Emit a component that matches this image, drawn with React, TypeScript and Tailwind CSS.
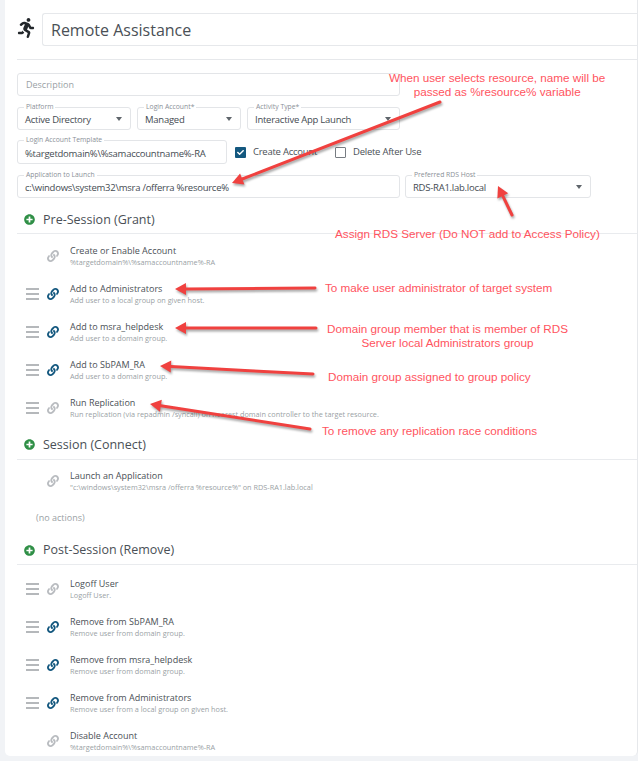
// App.tsx — Remote Assistance activity form with red annotations on top
import type { ReactNode } from 'react';
import { FaLink, FaPlusCircle, FaRunning, FaCheck } from 'react-icons/fa';

function Field({ label, className, children, arrow }: { label: string; className: string; children: ReactNode; arrow?: boolean }) {
  return (
    <div className={`relative flex items-center rounded-[3px] border border-[#e3e5e8] bg-white pl-[7px] pr-[8px] text-[9.5px] tracking-[-0.25px] text-[#444b52] ${className}`}>
      <span className="absolute -top-[5px] left-[6px] bg-white px-[2px] text-[6.8px] leading-[8px] tracking-normal text-[#8a9097]">{label}</span>
      <span className="flex-1 whitespace-nowrap pt-[4px]">{children}</span>
      {arrow && <span className="h-0 w-0 border-x-[3.5px] border-t-[4px] border-x-transparent border-t-[#5f656b]" />}
    </div>
  );
}

function Heading({ children, className }: { children: string; className: string }) {
  return (
    <div className={`flex items-center gap-[8px] border-b border-[#e9ebee] pl-[7px] ${className}`}>
      <FaPlusCircle className="mt-[2px] h-[11px] w-[11px] text-[#2f8f46]" />
      <span className="pt-[3px] text-[12.5px] text-[#4a5056]">{children}</span>
    </div>
  );
}

function Item({ title, sub, drag, active }: { title: string; sub: string; drag?: boolean; active?: boolean }) {
  return (
    <div className="flex h-[38px] shrink-0 items-center">
      <div className="flex w-[30px] flex-col gap-[3px] pl-[9px]">
        {drag && (
          <>
            <span className="h-[2px] w-[13px] bg-[#b5b8bb]" />
            <span className="h-[2px] w-[13px] bg-[#b5b8bb]" />
            <span className="h-[2px] w-[13px] bg-[#b5b8bb]" />
          </>
        )}
      </div>
      <FaLink className={`h-[12px] w-[12px] ${active ? 'text-[#14587f]' : 'text-[#b9bcc0]'}`} />
      <div className="ml-[11px] flex flex-col">
        <span className="whitespace-nowrap text-[9px] leading-[12px] text-[#4a5056]">{title}</span>
        <span className="whitespace-nowrap text-[7.3px] leading-[10px] text-[#9a9fa5]">{sub}</span>
      </div>
    </div>
  );
}

function Arrow({ x1, y1, x2, y2 }: { x1: number; y1: number; x2: number; y2: number }) {
  const len = Math.hypot(x2 - x1, y2 - y1);
  const ux = (x2 - x1) / len;
  const uy = (y2 - y1) / len;
  const bx = x2 - ux * 11;
  const by = y2 - uy * 11;
  return (
    <g>
      <line x1={x1} y1={y1} x2={bx} y2={by} stroke="#f0413f" strokeWidth={3} strokeLinecap="round" />
      <polygon points={`${x2},${y2} ${bx - uy * 6},${by + ux * 6} ${bx + uy * 6},${by - ux * 6}`} fill="#f0413f" />
    </g>
  );
}

function Note({ className, children }: { className: string; children: ReactNode }) {
  return <div className={`absolute whitespace-nowrap text-center font-['Liberation_Sans',sans-serif] text-[11.7px] leading-[14px] text-[#ff5460] ${className}`}>{children}</div>;
}

export default function App() {
  return (
    <div className="relative h-[761px] w-[638px] overflow-hidden bg-[#f1f3f6] pl-[5px] font-['Open_Sans',sans-serif]">
      <div className="flex h-[756px] flex-col overflow-hidden rounded-b-[5px] border-r border-[#e6e8eb] bg-white pl-[12px]">
        {/* cabecera */}
        <div className="flex h-[46px] shrink-0 items-end gap-[7px]">
          <div className="flex h-[33px] w-[18px] items-center justify-center pb-[4px]">
            <FaRunning className="h-[20px] w-[18px] text-[#23272b]" />
          </div>
          <div className="flex h-[33px] flex-1 items-center rounded-l-[3px] border border-r-0 border-[#e6e8eb] pl-[8px] text-[16px] text-[#4a5056]">
            Remote Assistance
          </div>
        </div>
        <div className="mt-[13px] h-px shrink-0 bg-[#e6e8eb]" />

        {/* formulario */}
        <div className="mt-[13px] flex h-[23px] w-[383px] shrink-0 items-center rounded-[3px] border border-[#e3e5e8] pl-[8px] pt-[1px] text-[9px] text-[#9a9fa5]">
          Description
        </div>
        <div className="mt-[11px] flex h-[23px] w-[383px] shrink-0 gap-[6px]">
          <Field label="Platform" className="w-[114px]" arrow>Active Directory</Field>
          <Field label="Login Account*" className="w-[104px]" arrow>Managed</Field>
          <Field label="Activity Type*" className="flex-1" arrow>Interactive App Launch</Field>
        </div>
        <div className="mt-[10px] flex h-[24px] shrink-0 items-center">
          <Field label="Login Account Template" className="h-[24px] w-[210px]">%targetdomain%\%samaccountname%-RA</Field>
          <span className="ml-[8px] flex h-[11px] w-[11px] items-center justify-center rounded-[1px] bg-[#14587f]">
            <FaCheck className="h-[7px] w-[7px] text-white" />
          </span>
          <span className="ml-[7px] w-[82px] text-[9.5px] tracking-[-0.25px] text-[#4a5056]">Create Account</span>
          <span className="h-[11px] w-[11px] rounded-[1px] border border-[#777c82]" />
          <span className="ml-[7px] text-[9.5px] tracking-[-0.25px] text-[#4a5056]">Delete After Use</span>
        </div>
        <div className="mt-[11px] flex h-[23px] shrink-0 gap-[5px]">
          <Field label="Application to Launch" className="w-[383px]">c:\windows\system32\msra /offerra %resource%</Field>
          <Field label="Preferred RDS Host" className="w-[186px]" arrow>RDS-RA1.lab.local</Field>
        </div>

        {/* acciones */}
        <Heading className="h-[36px] shrink-0 pt-[6px]">Pre-Session (Grant)</Heading>
        <div className="mt-[3px] flex shrink-0 flex-col">
          <Item title="Create or Enable Account" sub="%targetdomain%\%samaccountname%-RA" />
          <Item drag active title="Add to Administrators" sub="Add user to a local group on given host." />
          <Item drag active title="Add to msra_helpdesk" sub="Add user to a domain group." />
          <Item drag active title="Add to SbPAM_RA" sub="Add user to a domain group." />
          <Item drag title="Run Replication" sub="Run replication (via repadmin /syncall) on nearest domain controller to the target resource." />
        </div>
        <Heading className="h-[33px] shrink-0 pt-[1px]">Session (Connect)</Heading>
        <div className="mt-[2px] flex shrink-0 flex-col">
          <Item title="Launch an Application" sub={'"c:\\windows\\system32\\msra /offerra %resource%" on RDS-RA1.lab.local'} />
        </div>
        <div className="ml-[19px] mt-[9px] h-[18px] shrink-0 text-[9px] leading-[18px] text-[#9a9fa5]">(no actions)</div>
        <Heading className="mt-[7px] h-[31px] shrink-0">Post-Session (Remove)</Heading>
        <div className="mt-[5px] flex shrink-0 flex-col">
          <Item drag title="Logoff User" sub="Logoff User." />
          <Item drag active title="Remove from SbPAM_RA" sub="Remove user from domain group." />
          <Item drag active title="Remove from msra_helpdesk" sub="Remove user from domain group." />
          <Item drag active title="Remove from Administrators" sub="Remove user from a local group on given host." />
          <Item title="Disable Account" sub="%targetdomain%\%samaccountname%-RA" />
        </div>
      </div>

      {/* anotaciones sobre la captura */}
      <svg className="absolute inset-0 drop-shadow-[1px_2px_1px_rgba(0,0,0,0.35)]" width={638} height={761}>
        <Arrow x1={440} y1={102} x2={232} y2={183} />
        <Arrow x1={512} y1={215} x2={498} y2={186} />
        <Arrow x1={315} y1={288} x2={175} y2={289} />
        <Arrow x1={316} y1={328} x2={175} y2={328} />
        <Arrow x1={313} y1={374} x2={160} y2={366} />
        <Arrow x1={310} y1={429} x2={150} y2={404} />
      </svg>
      <Note className="left-[389px] top-[71px]">When user selects resource, name will be<br />passed as %resource% variable</Note>
      <Note className="left-[335px] top-[227px]">Assign RDS Server (Do NOT add to Access Policy)</Note>
      <Note className="left-[325px] top-[281px]">To make user administrator of target system</Note>
      <Note className="left-[327px] top-[322px]">Domain group member that is member of RDS<br />Server local Administrators group</Note>
      <Note className="left-[328px] top-[370px]">Domain group assigned to group policy</Note>
      <Note className="left-[322px] top-[424px]">To remove any replication race conditions</Note>
    </div>
  );
}
